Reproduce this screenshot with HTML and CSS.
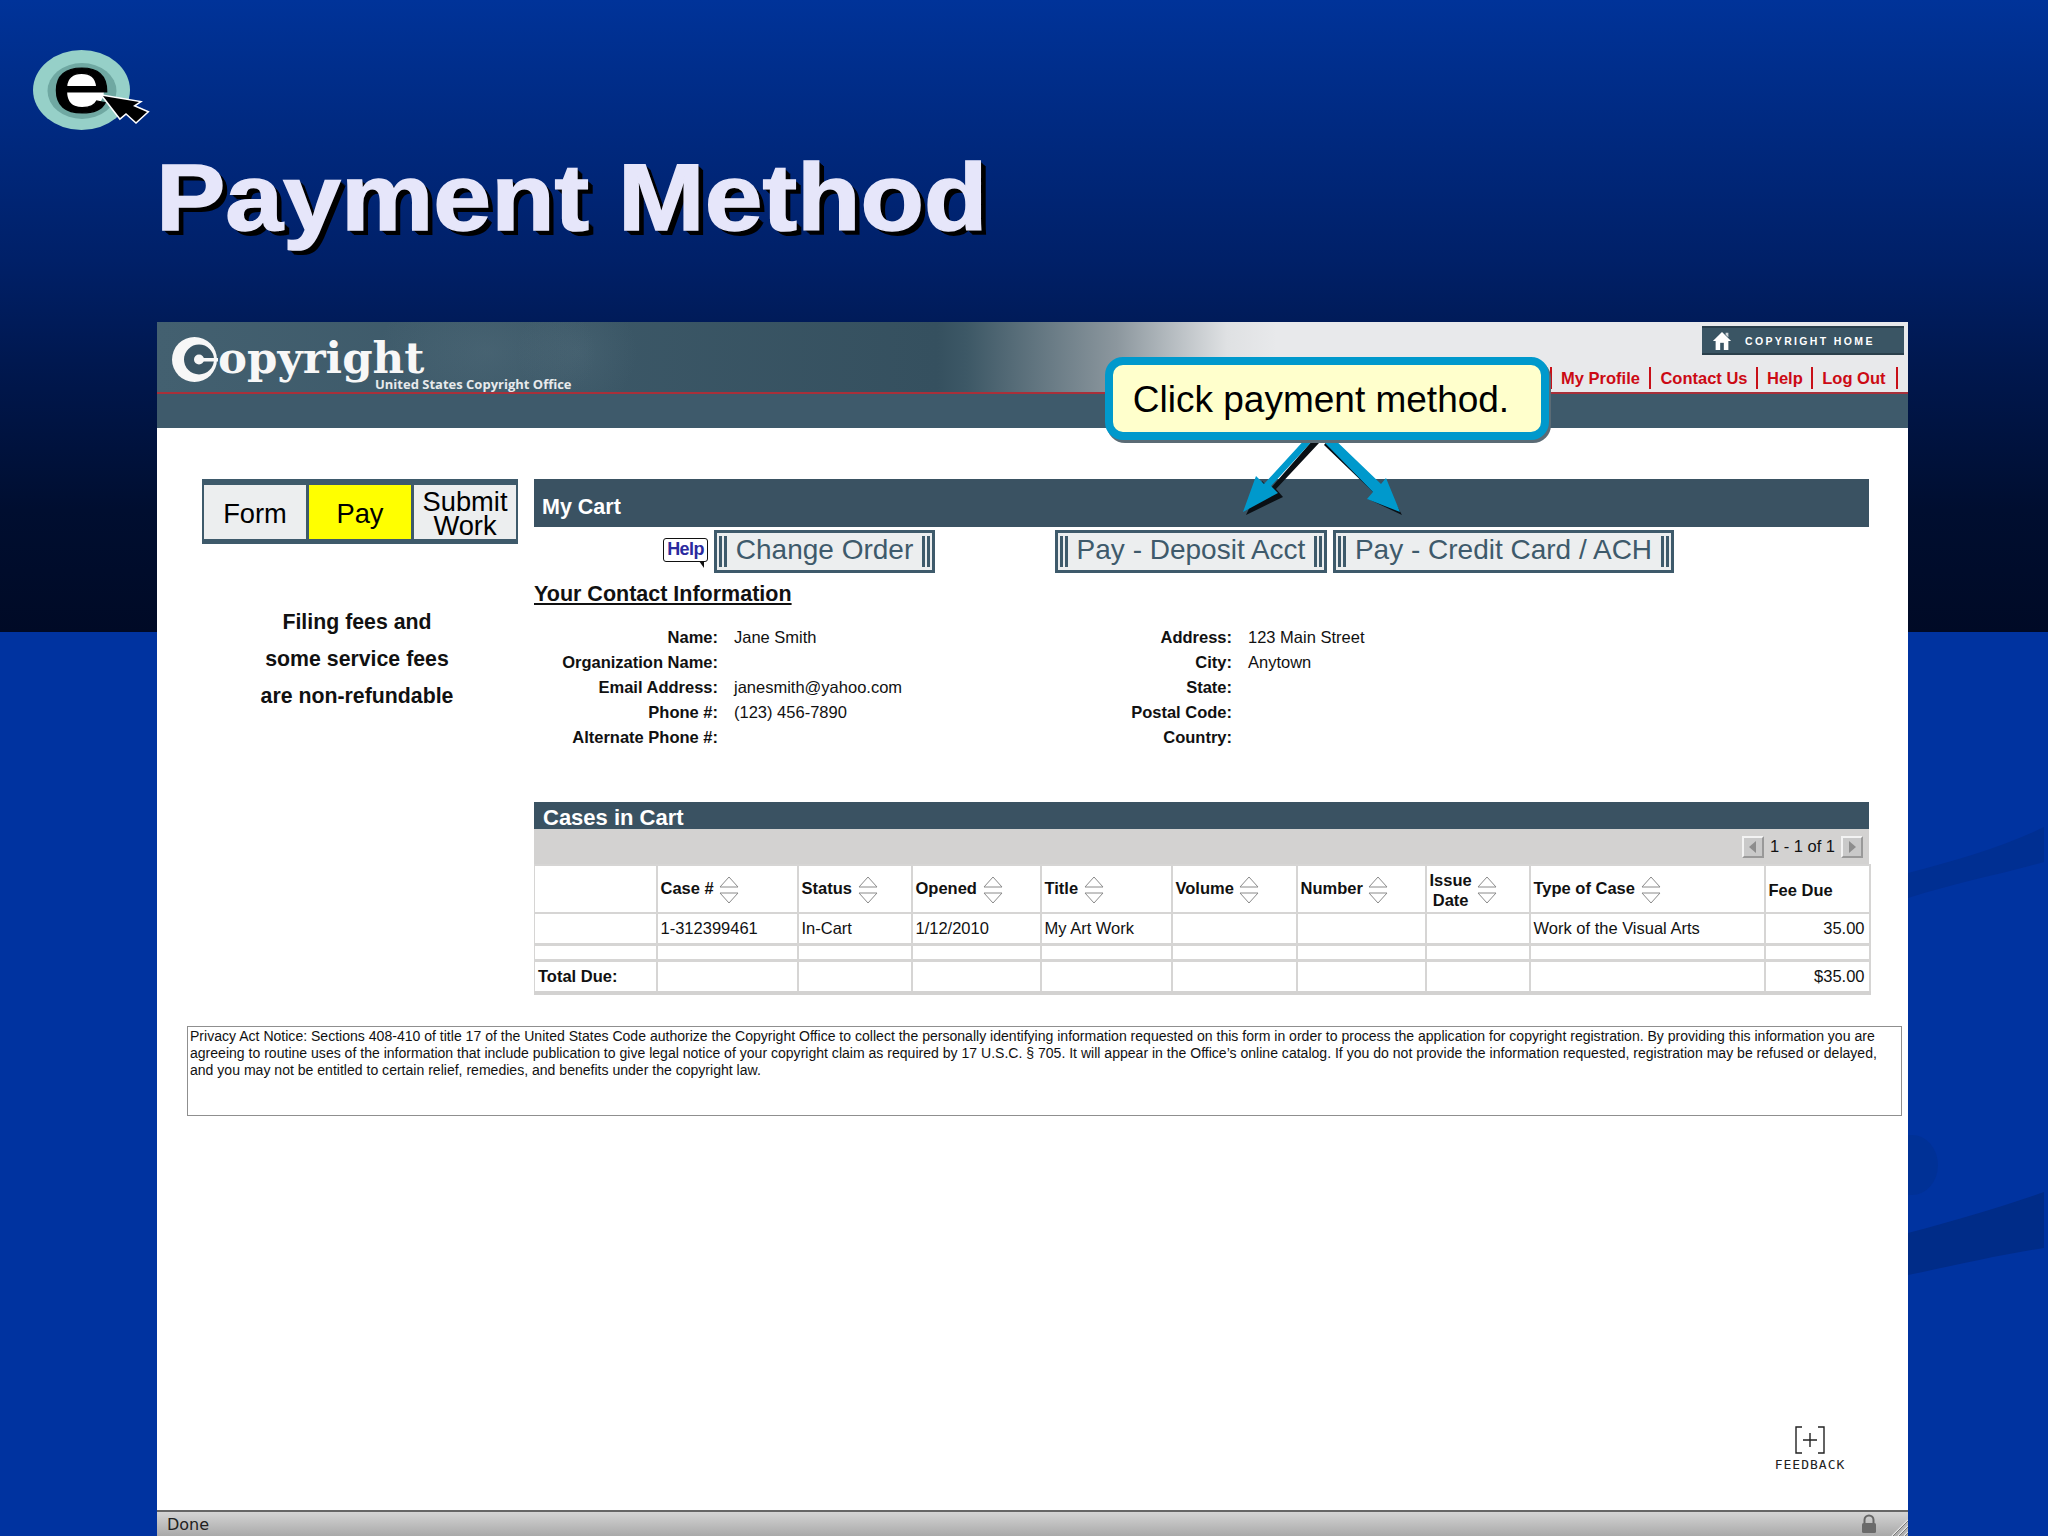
FILE: index.html
```html
<!DOCTYPE html>
<html lang="en">
<head>
<meta charset="utf-8">
<title>Payment Method</title>
<link rel="stylesheet" href="styles.css">
</head>
<body>
<svg class="sprites" width="0" height="0" aria-hidden="true">
  <symbol id="sort" viewBox="0 0 22 28">
    <path d="M11 1 L20 11 H2 Z M2 17 H20 L11 27 Z" fill="#fff" stroke="#8a8a8a" stroke-width="1"/>
  </symbol>
</svg>
<div class="slide">
  <svg class="swoosh" viewBox="0 0 140 500" aria-hidden="true">
    <path d="M0 53 C50 40 100 25 136 7 V42 C90 55 50 62 0 78 Z" fill="#002f92"/>
    <ellipse cx="4" cy="345" rx="26" ry="30" fill="#003196"/>
    <path d="M0 413 C50 400 100 385 136 372 V428 C90 435 50 445 0 455 Z" fill="#002c88"/>
  </svg>
  <header class="slide-head">
    <svg class="elogo" viewBox="0 0 120 90" aria-label="e logo">
      <ellipse cx="48.500" cy="40" rx="48.500" ry="40" fill="#96d0c8"/>
      <ellipse cx="49" cy="41" rx="34.500" ry="28" fill="#6fa8a2"/>
      <ellipse cx="48" cy="41" rx="23" ry="20" fill="#fff"/>
      <text class="elogo-e" x="0" y="62" transform="translate(19 0) scale(1.3 1)">e</text>
      <path class="elogo-cursor" d="M70 46 L106 52 L100 56 L114 62 L103 72 L93 63 L87 68 Z"/>
    </svg>
    <h1 class="slide-title">Payment Method</h1>
  </header>

  <div class="window">
    <div class="site-top">
      <div class="brand">
        <svg class="brand-c" viewBox="0 0 46 46" aria-hidden="true">
          <circle cx="22.500" cy="22.500" r="22.500" fill="#f7f7f7"/>
          <circle cx="27" cy="22.500" r="15" fill="#3a5564"/>
          <circle cx="27" cy="22.500" r="5" fill="#f7f7f7"/>
          <rect x="27" y="21" width="19" height="3.500" fill="#f7f7f7"/>
        </svg>
        <div class="brand-text">
          <div class="brand-name">opyright</div>
          <div class="brand-sub">United States Copyright Office</div>
        </div>
      </div>
      <div class="site-links">
        <a class="home-link">
          <svg class="house" viewBox="0 0 22 22" aria-hidden="true">
            <path d="M11 1 L21 11 L18 11 V21 H4 V11 H1 Z" fill="#fff"/>
            <rect x="9" y="13" width="4" height="8" fill="#3a5564"/>
            <path d="M15 2 H18 V7 L15 4 Z" fill="#cfd6da"/>
          </svg>
          <span>COPYRIGHT HOME</span>
        </a>
        <nav class="site-nav">
          <a>My Profile</a><a>Contact Us</a><a>Help</a><a>Log Out</a>
        </nav>
      </div>
    </div>
    <div class="site-strip"></div>

    <main class="page">
      <div class="work">
        <aside class="side">
          <div class="steps">
            <div class="step">Form</div>
            <div class="step step-on">Pay</div>
            <div class="step step-two">Submit<br>Work</div>
          </div>
          <p class="side-note">Filing fees and<br>some service fees<br>are non-refundable</p>
        </aside>

        <section class="cart">
          <div class="cart-title">My Cart</div>
          <div class="cart-actions">
            <span class="help-bubble">Help</span>
            <a class="btn btn-change"><span>Change Order</span></a>
            <a class="btn btn-deposit"><span>Pay - Deposit Acct</span></a>
            <a class="btn btn-credit"><span>Pay - Credit Card / ACH</span></a>
          </div>
          <h2 class="contact-title">Your Contact Information</h2>
          <dl class="contact">
            <dt>Name:</dt><dd>Jane Smith</dd><dt>Address:</dt><dd>123 Main Street</dd>
            <dt>Organization Name:</dt><dd></dd><dt>City:</dt><dd>Anytown</dd>
            <dt>Email Address:</dt><dd>janesmith@yahoo.com</dd><dt>State:</dt><dd></dd>
            <dt>Phone #:</dt><dd>(123) 456-7890</dd><dt>Postal Code:</dt><dd></dd>
            <dt>Alternate Phone #:</dt><dd></dd><dt>Country:</dt><dd></dd>
          </dl>

          <div class="cases-title">Cases in Cart</div>
          <div class="pager">
            <span class="page-btn"><i class="tri tri-l"></i></span>
            <span class="page-count">1 - 1 of 1</span>
            <span class="page-btn"><i class="tri tri-r"></i></span>
          </div>
          <table class="cases">
            <colgroup>
              <col class="c1"><col class="c2"><col class="c3"><col class="c4"><col class="c5">
              <col class="c6"><col class="c7"><col class="c8"><col class="c9"><col class="c10">
            </colgroup>
            <tr class="head">
              <th></th>
              <th>Case # <svg class="sort"><use href="#sort"/></svg></th>
              <th>Status <svg class="sort"><use href="#sort"/></svg></th>
              <th>Opened <svg class="sort"><use href="#sort"/></svg></th>
              <th>Title <svg class="sort"><use href="#sort"/></svg></th>
              <th>Volume <svg class="sort"><use href="#sort"/></svg></th>
              <th>Number <svg class="sort"><use href="#sort"/></svg></th>
              <th><span class="th-two">Issue<br>Date</span> <svg class="sort"><use href="#sort"/></svg></th>
              <th>Type of Case <svg class="sort"><use href="#sort"/></svg></th>
              <th>Fee Due</th>
            </tr>
            <tr class="data">
              <td></td><td>1-312399461</td><td>In-Cart</td><td>1/12/2010</td><td>My Art Work</td>
              <td></td><td></td><td></td><td>Work of the Visual Arts</td><td class="num">35.00</td>
            </tr>
            <tr class="gap">
              <td></td><td></td><td></td><td></td><td></td><td></td><td></td><td></td><td></td><td></td>
            </tr>
            <tr class="total">
              <th>Total Due:</th><td></td><td></td><td></td><td></td><td></td><td></td><td></td><td></td><td class="num">$35.00</td>
            </tr>
          </table>
        </section>
      </div>

      <div class="privacy">Privacy Act Notice: Sections 408-410 of title 17 of the United States Code authorize the Copyright Office to collect the personally identifying information requested on this form in order to process the application for copyright registration. By providing this information you are<br>agreeing to routine uses of the information that include publication to give legal notice of your copyright claim as required by 17 U.S.C. § 705. It will appear in the Office’s online catalog. If you do not provide the information requested, registration may be refused or delayed,<br>and you may not be entitled to certain relief, remedies, and benefits under the copyright law.</div>
    </main>

    <footer class="status">
      <span class="status-text">Done</span>
      <svg class="lock" viewBox="0 0 16 20" aria-hidden="true">
        <path d="M3.500 9 V6 a4.500 4.500 0 0 1 9 0 V9" fill="none" stroke="#666" stroke-width="2"/>
        <rect x="1" y="9" width="14" height="10" rx="1.500" fill="#6a6a6a"/>
      </svg>
      <svg class="grip" viewBox="0 0 18 18" aria-hidden="true">
        <path d="M2 18 L18 2 M8 18 L18 8 M14 18 L18 14" stroke="#e8e8e8" stroke-width="1.200"/>
        <path d="M3 18 L18 3 M9 18 L18 9 M15 18 L18 15" stroke="#777" stroke-width="1"/>
      </svg>
    </footer>

    <svg class="arrows" viewBox="1230 430 190 95" aria-hidden="true">
      <path class="arrow-shadow" d="M1319 443 L1276 489 L1283 497 L1246 515 L1262 481 L1270 489 L1312 441 Z"/>
      <path class="arrow-fill" d="M1315 438 L1271 486 L1278 493 L1243 512 L1256 476 L1264 484 L1308 436 Z"/>
      <path class="arrow-shadow" d="M1327 441 L1378 489 L1384 482 L1402 515 L1368 499 L1374 493 L1324 445 Z"/>
      <path class="arrow-fill" d="M1331 436 L1381 484 L1386 478 L1400 512 L1367 499 L1373 492 L1324 442 Z"/>
    </svg>
    <div class="callout">Click payment method.</div>

    <div class="feedback">
      <svg class="fb-mark" viewBox="0 0 32 28" aria-hidden="true">
        <path d="M8 1 H2 V27 H8 M24 1 H30 V27 H24 M16 7 V21 M9 14 H23" fill="none" stroke="#222" stroke-width="1.400"/>
      </svg>
      <span>FEEDBACK</span>
    </div>
  </div>
</div>
</body>
</html>
```

FILE: styles.css
```css
* { box-sizing: border-box; }

html, body {
  margin: 0;
  padding: 0;
}

body {
  width: 2048px;
  height: 1536px;
  overflow: hidden;
  font-family: "Liberation Sans", Arial, sans-serif;
  color: #111;
}

.sprites { position: absolute; }

.slide {
  position: relative;
  width: 2048px;
  height: 1536px;
  display: flex;
  flex-direction: column;
  background:
    linear-gradient(#003399 0, #002a82 120px, #002068 260px, #001850 360px, #000e30 510px, #000a26 632px) top / 100% 632px no-repeat,
    #0033a0;
}

.swoosh {
  position: absolute;
  left: 1908px;
  top: 820px;
  width: 140px;
  height: 500px;
}

.slide-head {
  height: 322px;
  position: relative;
  padding: 50px 0 0 33px;
}

.elogo {
  display: block;
  width: 120px;
  height: 90px;
  overflow: visible;
}

.elogo-e {
  font: 400 82px "Liberation Sans", sans-serif;
  fill: #000;
  stroke: #000;
  stroke-width: 1.200px;
}

.elogo-cursor {
  fill: #000;
  stroke: #fff;
  stroke-width: 3px;
  paint-order: stroke;
}

.slide-title {
  width: fit-content;
  margin: 7px 0 0 123px;
  font: 700 95px/100px "Liberation Sans", Arial, sans-serif;
  color: #e6e6fa;
  -webkit-text-stroke: 1.500px #e6e6fa;
  text-shadow: 1px 1px 0 #000, 2px 2px 0 #000, 3px 3px 0 #000, 4px 4px 0 #000, 5px 5px 0 #000;
  white-space: nowrap;
  transform: scaleX(1.094);
  transform-origin: left center;
}

.window {
  position: relative;
  margin-left: 157px;
  width: 1751px;
  height: 1214px;
  display: flex;
  flex-direction: column;
  background: #fff;
}

/* site header */
.site-top {
  height: 72px;
  display: flex;
  justify-content: space-between;
  border-bottom: 2px solid #a8303a;
  background:
    radial-gradient(ellipse 110px 70px at 330px 30px, rgba(120, 145, 158, .16), transparent),
    radial-gradient(ellipse 60px 60px at 420px 30px, rgba(120, 145, 158, .14), transparent),
    linear-gradient(to right, #436070 0, #35505f 780px, #3d5866 810px, #8c979e 960px, #dfe1e3 1070px, #e8e9eb 1120px);
}

.brand {
  display: flex;
  padding: 14px 0 0 15px;
}

.brand-c {
  width: 46px;
  height: 46px;
  margin-top: 1px;
}

.brand-name {
  font: 700 43.500px/44px "DejaVu Serif", serif;
  color: #f7f7f7;
}

.brand-sub {
  margin: -3px 0 0 157px;
  font: 700 13px/14px "Open Sans", sans-serif;
  color: #e8eaec;
  white-space: nowrap;
}

.site-links {
  display: flex;
  flex-direction: column;
  align-items: flex-end;
  padding: 4px 4px 0 0;
}

.home-link {
  width: 202px;
  height: 29px;
  display: flex;
  align-items: center;
  gap: 13px;
  padding-left: 10px;
  background: #3a5564;
  border-top: 2px solid #2a3f4b;
  border-bottom: 2px solid #2a3f4b;
  color: #fff;
  font: 700 10.500px "Liberation Sans", sans-serif;
  letter-spacing: 2.350px;
}

.house {
  width: 20px;
  height: 20px;
  flex: none;
}

.site-nav {
  display: flex;
  margin: 12px 6px 0 0;
  border-left: 2px solid #c81018;
}

.site-nav a {
  height: 22px;
  padding: 0 8.500px 0 9px;
  border-right: 2px solid #c81018;
  font: 700 16.500px/22px "Liberation Sans", sans-serif;
  color: #cc0a14;
}

.site-nav a:first-child { padding-right: 9.500px; }
.site-nav a:last-child { padding-right: 10.500px; }

.site-strip {
  height: 34px;
  background: #3e5a6b;
}

/* page body */
.page {
  flex: 1;
  min-height: 0;
  padding-top: 51px;
}

.work {
  display: flex;
  padding-left: 45px;
  gap: 16px;
}

.side {
  width: 316px;
  flex: none;
}

.steps {
  height: 65px;
  display: flex;
  gap: 3px;
  padding: 6px 2px 5px;
  background: #3e5a6b;
}

.step {
  flex: 1;
  display: flex;
  align-items: center;
  justify-content: center;
  padding-top: 3px;
  background: #eceeef;
  font-size: 27.300px;
  line-height: 24px;
  text-align: center;
  color: #000;
}

.step-on { background: #ffff00; }

.side-note {
  margin: 60px 0 0;
  padding-right: 6px;
  font-size: 21.300px;
  line-height: 37px;
  font-weight: 700;
  text-align: center;
  color: #111;
}

.cart {
  width: 1335px;
  flex: none;
}

.cart-title {
  height: 48px;
  padding: 12px 0 0 8px;
  background: #3a5262;
  color: #fff;
  font-size: 21.500px;
  font-weight: 700;
  line-height: 32px;
}

.cart-actions {
  height: 43px;
  margin-top: 3px;
  display: flex;
  align-items: stretch;
}

.help-bubble {
  position: relative;
  align-self: flex-start;
  margin: 8px 6px 0 129px;
  width: 45px;
  height: 24px;
  border: 1.500px solid #111;
  border-radius: 3px;
  text-align: center;
  color: #2a2a9e;
  font-size: 18px;
  font-weight: 700;
  line-height: 20px;
  letter-spacing: -.6px;
}

.help-bubble::after {
  content: "";
  position: absolute;
  right: 3px;
  bottom: -7px;
  border-top: 7px solid #111;
  border-left: 5px solid transparent;
}

.btn {
  display: flex;
  align-items: center;
  padding: 3px 2px;
  border: 3px solid #3e5a6b;
  background: #eceeef;
  color: #3e5a6b;
  font-size: 28px;
  white-space: nowrap;
}

.btn span {
  display: block;
  width: 100%;
  height: 100%;
  padding: 0;
  border-left: 8px double #3e5a6b;
  border-right: 8px double #3e5a6b;
  line-height: 28px;
  text-align: center;
}

.btn-change { width: 221px; }
.btn-deposit { width: 272px; margin-left: 120px; }
.btn-credit { width: 341px; margin-left: 6px; }

.contact-title {
  display: inline-block;
  margin: 9px 0 0;
  font-size: 21.500px;
  font-weight: 700;
  line-height: 25px;
  text-decoration: underline;
  color: #111;
}

.contact {
  margin: 18px 0 0;
  display: grid;
  grid-template-columns: 184px 234px 248px 1fr;
  grid-auto-rows: 25px;
  column-gap: 16px;
  font-size: 16.500px;
  line-height: 25px;
}

.contact dt {
  font-weight: 700;
  text-align: right;
}

.contact dd { margin: 0; }

.cases-title {
  height: 27px;
  margin-top: 52px;
  padding-left: 9px;
  background: #3a5262;
  color: #fff;
  font-size: 22px;
  font-weight: 700;
  line-height: 32px;
}

.pager {
  height: 35px;
  display: flex;
  align-items: center;
  justify-content: flex-end;
  gap: 6px;
  padding-right: 6px;
  background: #d3d2d1;
  font-size: 16.500px;
}

.page-btn {
  width: 22px;
  height: 22px;
  display: flex;
  align-items: center;
  justify-content: center;
  border: 2px solid #f3f3f3;
  border-right-color: #999;
  border-bottom-color: #999;
  background: #c9c9c9;
}

.tri {
  width: 0;
  height: 0;
  border-top: 6px solid transparent;
  border-bottom: 6px solid transparent;
}

.tri-l { border-right: 7px solid #8d8d8d; }
.tri-r { border-left: 7px solid #8d8d8d; }

.cases {
  width: 1335px;
  table-layout: fixed;
  border-collapse: collapse;
  font-size: 16.500px;
  border-bottom: 4px solid #d3d2d1;
}

.c1 { width: 122px; }
.c2 { width: 141px; }
.c3 { width: 114px; }
.c4 { width: 129px; }
.c5 { width: 131px; }
.c6 { width: 125px; }
.c7 { width: 129px; }
.c8 { width: 104px; }
.c9 { width: 235px; }
.c10 { width: 105px; }

.cases th, .cases td {
  padding: 0 4px 0 3px;
  border: 2px solid #d6d5d4;
  text-align: left;
  white-space: nowrap;
  font-weight: 400;
  overflow: hidden;
}

.cases th { font-weight: 700; }

.head th { height: 48px; padding-top: 2px; }
.head th:first-child, .data td:first-child, .gap td:first-child, .total th:first-child { border-left-width: 1px; }
.data td { height: 31px; border-bottom-width: 3px; }
.gap td { height: 16px; border-bottom-width: 3px; }
.total td, .total th { height: 33px; }
.num { text-align: right !important; padding-right: 4px; }

.sort {
  width: 22px;
  height: 28px;
  vertical-align: middle;
}

.th-two {
  display: inline-block;
  vertical-align: middle;
  text-align: center;
  line-height: 20px;
}

.privacy {
  width: 1715px;
  height: 90px;
  margin: 31px 0 0 30px;
  padding: 1px 2px;
  border: 1px solid #8f8f8f;
  font-size: 14.060px;
  line-height: 17px;
  white-space: nowrap;
  color: #111;
}

/* browser status bar */
.status {
  height: 26px;
  flex: none;
  display: flex;
  align-items: center;
  padding-left: 10px;
  border-top: 2px solid #666;
  background: linear-gradient(#d4d4d4, #a9a9a9);
}

.status-text {
  flex: 1;
  font: 16px "DejaVu Sans", sans-serif;
  color: #222;
}

.lock {
  width: 16px;
  height: 20px;
  margin-right: 13px;
}

.grip {
  width: 18px;
  height: 18px;
  margin-top: 6px;
}

/* overlays */
.callout {
  position: absolute;
  left: 948px;
  top: 35px;
  width: 444px;
  height: 83px;
  display: flex;
  align-items: center;
  justify-content: center;
  padding: 2px 12px 0 0;
  border: 8px solid #0099cc;
  border-radius: 18px;
  background: #ffffcc;
  box-shadow: 2px 3px 0 #5b6b75;
  color: #000;
  font-size: 37px;
  white-space: nowrap;
}

.arrows {
  position: absolute;
  left: 1073px;
  top: 108px;
  width: 190px;
  height: 95px;
}

.arrow-fill { fill: #0099cc; }
.arrow-shadow { fill: #0a0f14; }

.feedback {
  position: absolute;
  left: 1615px;
  top: 1104px;
  width: 76px;
  display: flex;
  flex-direction: column;
  align-items: center;
  color: #222;
  font: 13px/14px "DejaVu Sans Mono", monospace;
  letter-spacing: 1px;
}

.fb-mark {
  width: 32px;
  height: 28px;
  margin-bottom: 4px;
}
```
